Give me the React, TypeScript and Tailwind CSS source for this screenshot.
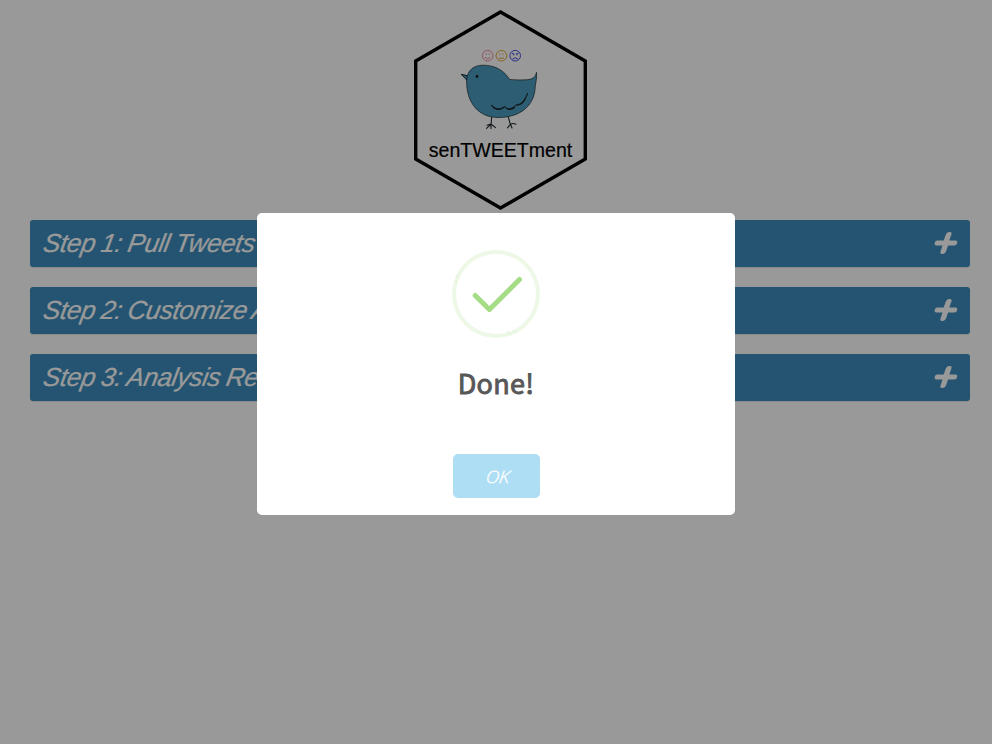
import React from "react";

const steps = ["Step 1: Pull Tweets", "Step 2: Customize Analysis", "Step 3: Analysis Results"];

function Logo() {
  return (
    <svg width="174" height="200" viewBox="413 10 174 200" className="block" fill="none">
      <path d="M500.5 12 L585.3 61 V159 L500.5 208 L415.7 159 V61 Z" stroke="#000" strokeWidth="3.4" />
      <g stroke="#f08a9f" strokeWidth="1">
        <circle cx="487.7" cy="55.7" r="5.3" />
        <path d="M484.9 57.3 Q487.7 60.3 490.5 57.3 M486.2 53.4v1.4 M489.2 53.4v1.4" />
      </g>
      <g stroke="#e5a92f" strokeWidth="1">
        <circle cx="501.4" cy="55.7" r="5.3" />
        <path d="M498.8 58.2 H504 M499.9 53.4v1.4 M502.9 53.4v1.4" />
      </g>
      <g stroke="#4850d6" strokeWidth="1">
        <circle cx="515.2" cy="55.7" r="5.3" />
        <path d="M512.4 59.2 Q515.2 56.4 518 59.2 M512 53.2l2.4 1 M518.4 53.2l-2.4 1 M513.5 54v1.4 M516.9 54v1.4" />
      </g>
      <g stroke="#20282c" strokeWidth="1" strokeLinecap="round" strokeLinejoin="round">
        <path d="M467.5 75.7 L461.2 74.3 L466.8 80" fill="#4c9cbe" />
        <path
          d="M466.6 79.5 C467.5 70 474 65.2 483 65.2 C495 65.2 504 70.2 509.5 79.4 C518 80 527 80.5 531.5 78.8 C534.5 77.6 535.8 75.4 536.5 72.4 C537.2 78 535.5 83 535.2 87 C534.5 106 520 117.5 498 117.5 C480 117.5 466 104.5 466.6 79.5 Z"
          fill="#4c9cbe" strokeWidth=".7"
        />
        <path d="M491.6 117.6 L491 125 M491 124 L486.6 128.3 M491 124 V128.5 M491 124 L495.5 127.6 M487 125.2 L491 124 M508.3 116.8 L510.5 125 M510.5 124.3 L507.5 127.8 M510.5 124.3 L512 128 M510.5 124.3 Q513 122.8 515.8 124.2" strokeWidth="1.1" />
        <path d="M491.5 105.3 Q497.5 112 504.5 106.6 Q510 112 516 105 Q523.5 105.5 527.5 93.5" strokeWidth="1.1" />
        <path d="M494 107.8 Q499 110.5 503 108 M507 108.7 Q511.5 110.2 514.5 107.5 M517.5 104.8 Q522 104.5 524.5 100" strokeWidth="1.4" />
      </g>
      <circle cx="477" cy="76.4" r="1.3" fill="#111" />
      <text x="428.8" y="156.5" fontSize="21" textLength="143.4" lengthAdjust="spacingAndGlyphs" fill="#000" stroke="#000" strokeWidth=".2" className="font-['Liberation_Sans',sans-serif]">
        senTWEETment
      </text>
    </svg>
  );
}

function StepBar({ title }: { title: string }) {
  return (
    <div className="flex h-[47px] items-center justify-between rounded-[3px] bg-[#3c8dbc] pr-3 pl-[11px] text-white shadow-[0_1px_1px_rgba(0,0,0,0.1)]">
      <span className="-mt-[2px] origin-bottom-left -skew-x-[10deg] font-['Liberation_Sans',sans-serif] text-[26px] leading-[30px] tracking-[-0.4px] whitespace-nowrap italic [word-spacing:-1px] [-webkit-text-stroke:0.2px]">
        {title}
      </span>
      <svg width="24" height="24" viewBox="0 0 24 24" className="-mt-[1px]" fill="currentColor">
        <path d="M3 9.5H9.7L11.8 3.6Q12.7 1.1 14.9 1.1H15.9Q18.2 1.1 17.4 3.5L15.3 9.5H21.4Q23.8 9.5 23.2 12Q22.6 14.5 20.3 14.5H14L12.1 20.2Q11.2 22.9 8.9 22.9H7.9Q5.7 22.9 6.6 20.2L8.5 14.5H2.5Q.3 14.5 .7 12Q1.1 9.5 3 9.5Z" />
      </svg>
    </div>
  );
}

export default function App() {
  return (
    <div className="relative h-[744px] w-[992px] overflow-hidden bg-white">
      <header className="flex justify-center pt-[10px] pl-2">
        <Logo />
      </header>
      <main className="mt-[10px] flex flex-col gap-5 pr-[22px] pl-[30px]">
        {steps.map((s) => (
          <StepBar key={s} title={s} />
        ))}
      </main>
      <div className="absolute inset-0 bg-black/40">
        <section className="mx-auto mt-[213px] flex h-[302px] w-[478px] flex-col items-center rounded-[5px] bg-white pt-[37px]">
          <svg width="88" height="88" viewBox="0 0 88 88" fill="none">
            <circle cx="44" cy="44" r="42" stroke="#edf8e7" strokeWidth="4" />
            <path d="M23.2 45.4L37.4 59.6L67.5 29.5" stroke="#a5dc86" strokeWidth="5" strokeLinecap="round" strokeLinejoin="round" />
            <path d="M4 27L8 23M3 33L7 28M55 80L59 85M61 80L65 83" stroke="#d5eec9" strokeWidth=".6" />
          </svg>
          <h2 className="mt-[25px] h-10 font-['Noto_Sans_CJK_SC',sans-serif] text-[27px] leading-10 font-normal tracking-[0.3px] text-[#575757] [-webkit-text-stroke:0.9px]">
            Done!
          </h2>
          <button className="mt-[51px] h-11 w-[87px] rounded-[5px] bg-[#aedef4] pt-[2px] pl-1 font-['Open_Sans',sans-serif] text-[17px] font-light text-white italic">
            <span className="inline-block -skew-x-[6deg] scale-x-110 [-webkit-text-stroke:0.3px]">OK</span>
          </button>
        </section>
      </div>
    </div>
  );
}
